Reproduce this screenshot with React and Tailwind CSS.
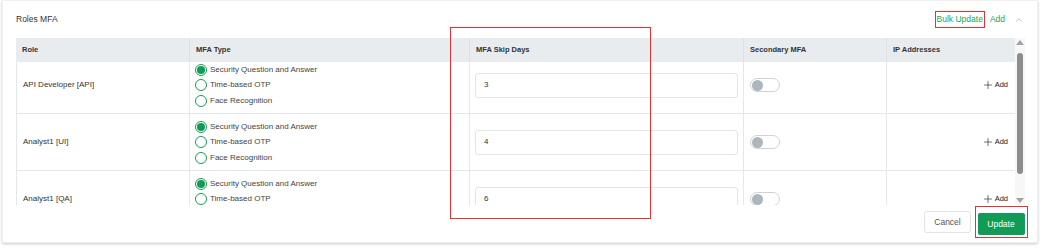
import { ChevronUp, Plus } from "lucide-react";

const rows = [
  { role: "API Developer [API]", days: "3", options: 3 },
  { role: "Analyst1 [UI]", days: "4", options: 3 },
  { role: "Analyst1 [QA]", days: "6", options: 3 },
];

const mfaTypes = ["Security Question and Answer", "Time-based OTP", "Face Recognition"];

const cols = "grid grid-cols-[173px_280px_274px_143px_129px]";

function Radio({ checked, label }) {
  return (
    <div className="flex items-center h-[15.5px] gap-[3px]">
      <span className="w-[12px] h-[12px] rounded-full border border-[#1a9b5b] flex items-center justify-center bg-white">
        {checked && <span className="w-[8px] h-[8px] rounded-full bg-[#0f9a55]" />}
      </span>
      <span className="text-[8px] text-[#444]">{label}</span>
    </div>
  );
}

function Toggle() {
  return (
    <div className="w-[30px] h-[14px] rounded-full border border-[#cfd3d8] bg-white flex items-center px-[1px]">
      <span className="w-[11px] h-[11px] rounded-full bg-[#adb5bd]" />
    </div>
  );
}

function Row({ row }) {
  return (
    <div className={`${cols} h-[57px] border-b border-[#e4e7eb]`}>
      <div className="border-l border-[#e4e7eb] px-[6px] flex items-center text-[8px] text-[#333]">
        {row.role}
      </div>
      <div className="border-l border-[#e4e7eb] px-[5px] flex flex-col justify-center">
        {mfaTypes.map((t, i) => (
          <Radio key={t} checked={i === 0} label={t} />
        ))}
      </div>
      <div className="border-l border-[#e4e7eb] px-[5px] flex items-center">
        <div className="w-full h-[25px] border border-[#e1e4e8] rounded-[3px] flex items-center px-[8px] text-[8px] text-[#333]">
          {row.days}
        </div>
      </div>
      <div className="border-l border-[#e4e7eb] px-[6px] flex items-center">
        <Toggle />
      </div>
      <div className="border-l border-[#e4e7eb] pr-[7px] flex items-center justify-end gap-[1px]">
        <Plus size={12} strokeWidth={1.3} className="text-[#222]" />
        <span className="text-[7.5px] font-medium text-[#222]">Add</span>
      </div>
    </div>
  );
}

export default function App() {
  return (
    <div className="relative w-[1047px] h-[252px] bg-white font-['Liberation_Sans',Arial,sans-serif]">
      <div className="ml-[2px] w-[1036px] h-[243px] bg-white border border-[#f0f0f0] rounded-[2px] shadow-[0_1px_3px_rgba(0,0,0,0.22)] flex flex-col">
        <div className="h-[37px] flex items-center justify-between pl-[13px] pr-[13px]">
          <span className="text-[8.5px] text-[#333]">Roles MFA</span>
          <div className="flex items-center">
            <span className="border-[1.5px] border-[#e5312f] px-[1px] h-[17px] flex items-center text-[8.5px] font-medium text-[#24a25d]">
              Bulk Update
            </span>
            <span className="ml-[5px] text-[8.5px] font-medium text-[#24a25d]">Add</span>
            <ChevronUp size={10} strokeWidth={1.5} className="ml-[9px] text-[#9a9a9a]" />
          </div>
        </div>

        <div className="flex pl-[13px]">
          <div className="w-[999px]">
            <div className={`${cols} h-[24px] bg-[#e9ecef]`}>
              {["Role", "MFA Type", "MFA Skip Days", "Secondary MFA", "IP Addresses"].map((h, i) => (
                <div
                  key={h}
                  className={`flex items-center px-[6px] text-[7.5px] font-bold text-[#333] ${i > 0 ? "border-l border-[#dde0e4]" : ""}`}
                >
                  {h}
                </div>
              ))}
            </div>
            <div className="h-[143px] overflow-hidden">
              <div className="-mt-[5px]">
                {rows.map((r) => (
                  <Row key={r.role} row={r} />
                ))}
              </div>
            </div>
          </div>
          <div className="w-[10px] h-[167px] bg-[#f7f7f7] flex flex-col items-center">
            <span className="mt-[2px] w-0 h-0 border-l-[4px] border-r-[4px] border-b-[5px] border-l-transparent border-r-transparent border-b-[#a3a3a3]" />
            <span className="mt-[8px] w-[6px] h-[121px] rounded-full bg-[#8d8d8d]" />
            <span className="mt-auto mb-[2px] w-0 h-0 border-l-[4px] border-r-[4px] border-t-[5px] border-l-transparent border-r-transparent border-t-[#a3a3a3]" />
          </div>
        </div>

        <div className="flex justify-end items-start pt-[1px] pr-[9px]">
          <button className="mt-[5px] w-[47px] h-[22px] border border-[#e3e3e3] rounded-[3px] text-[8.5px] text-[#555] bg-white">
            Cancel
          </button>
          <div className="ml-[4px] border-[1.5px] border-[#e5312f] pt-[3px] pb-[2px] pl-[1.5px] pr-[2.5px]">
            <button className="w-[47px] h-[22px] rounded-[2px] bg-[#119b56] text-[8.5px] text-white">
              Update
            </button>
          </div>
        </div>
      </div>

      <div className="absolute left-[450px] top-[27px] w-[201px] h-[192px] border-[1.5px] border-[#e5312f] pointer-events-none" />
    </div>
  );
}
